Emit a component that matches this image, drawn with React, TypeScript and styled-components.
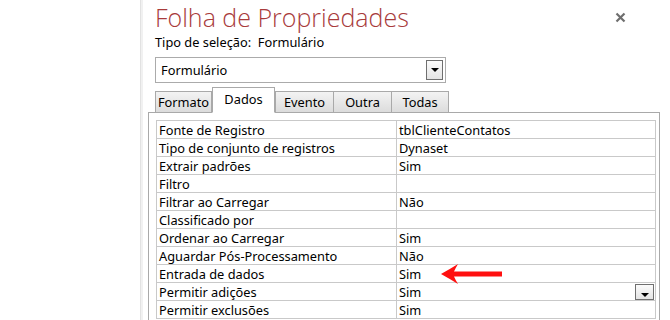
import React from 'react';
import styled, { createGlobalStyle } from 'styled-components';

const GlobalStyle = createGlobalStyle`
  html, body {
    margin: 0;
    padding: 0;
    background: #ffffff;
  }
  body {
    font-family: "Noto Sans", "Open Sans", sans-serif;
    font-size: 12.8px;
    color: #000;
  }
`;

const Page = styled.div`
  display: flex;
  width: 670px;
  height: 320px;
  overflow: hidden;
  background: #fff;
`;

const Blank = styled.div`
  width: 140px;
  flex-shrink: 0;
  border-right: 1px solid #e2e2e2;
  box-shadow: 2px 0 0 #f1f1f1;
`;

const Pane = styled.div`
  flex: 1;
  display: flex;
  flex-direction: column;
  padding-left: 7px;
  padding-right: 11px;
`;

const Header = styled.div`
  display: flex;
  flex-direction: column;
  padding-left: 7px;
  position: relative;
`;

const Title = styled.h1`
  margin: 0;
  padding-top: 1px;
  font-family: "Open Sans", "Noto Sans", sans-serif;
  font-weight: 300;
  font-size: 25px;
  line-height: 32px;
  color: #a83b3b;
`;

const CloseButton = styled.div`
  position: absolute;
  top: 9px;
  right: 34px;
  width: 11px;
  height: 11px;
`;

const SelectionType = styled.div`
  margin-top: 1px;
  line-height: 17px;
  white-space: pre;
`;

const Combo = styled.div`
  margin-top: 6px;
  width: 291px;
  height: 26px;
  box-sizing: border-box;
  border: 1px solid #ababab;
  display: flex;
  align-items: center;
  justify-content: space-between;
  padding: 0 2px 0 5px;
`;

const DropButton = styled.div<{ $small?: boolean }>`
  width: ${(p) => (p.$small ? 19 : 17)}px;
  height: ${(p) => (p.$small ? 16 : 20)}px;
  box-sizing: border-box;
  border: 1px solid #6f6f6f;
  background: linear-gradient(#fbfbfb, #e4e4e4);
  display: flex;
  align-items: ${(p) => (p.$small ? 'flex-end' : 'center')};
  justify-content: center;
  padding-bottom: ${(p) => (p.$small ? 2 : 0)}px;
`;

const Triangle = styled.div`
  width: 0;
  height: 0;
  border-left: 4px solid transparent;
  border-right: 4px solid transparent;
  border-top: 4px solid #000;
`;

const Tabs = styled.div`
  display: flex;
  align-items: flex-end;
  margin-top: 4px;
  padding-left: 7px;
  height: 26px;
  position: relative;
  z-index: 1;
  margin-bottom: -1px;
`;

const Tab = styled.div<{ $active?: boolean; $w: number }>`
  width: ${(p) => p.$w}px;
  box-sizing: border-box;
  height: ${(p) => (p.$active ? 26 : 22)}px;
  border: 1px solid #a9a9a9;
  border-bottom: ${(p) => (p.$active ? '1px solid #fff' : '1px solid #a9a9a9')};
  margin-left: ${(p) => (p.$active ? 1 : 0)}px;
  margin-right: ${(p) => (p.$active ? 0 : -1)}px;
  background: ${(p) => (p.$active ? '#fff' : 'linear-gradient(#f3f3f3, #dcdcdc)')};
  display: flex;
  justify-content: center;
  align-items: ${(p) => (p.$active ? 'flex-start' : 'center')};
  padding-top: ${(p) => (p.$active ? 2 : 0)}px;
  position: relative;
  z-index: ${(p) => (p.$active ? 2 : 1)};
`;

const Sheet = styled.div`
  flex: 1;
  border: 1px solid #a9a9a9;
  border-bottom: none;
  padding: 7px 3px 0 7px;
`;

const Grid = styled.table`
  border-collapse: collapse;
  width: 500px;
  table-layout: fixed;
`;

const Row = styled.tr`
  height: 18px;
`;

const Cell = styled.td<{ $w?: number }>`
  ${(p) => (p.$w ? `width: ${p.$w}px;` : '')}
  border: 1px solid #c9c9c9;
  padding: 0 0 0 2px;
  height: 17px;
  line-height: 16px;
  white-space: nowrap;
  overflow: visible;
  position: relative;
`;

const Arrow = styled.svg`
  position: absolute;
  left: 44px;
  top: -2px;
`;

const ComboInCell = styled.div`
  position: absolute;
  right: 1px;
  top: 1px;
`;

const rows: [string, string][] = [
  ['Fonte de Registro', 'tblClienteContatos'],
  ['Tipo de conjunto de registros', 'Dynaset'],
  ['Extrair padrões', 'Sim'],
  ['Filtro', ''],
  ['Filtrar ao Carregar', 'Não'],
  ['Classificado por', ''],
  ['Ordenar ao Carregar', 'Sim'],
  ['Aguardar Pós-Processamento', 'Não'],
  ['Entrada de dados', 'Sim'],
  ['Permitir adições', 'Sim'],
  ['Permitir exclusões', 'Sim'],
];

const tabs = [
  { name: 'Formato', w: 57 },
  { name: 'Dados', w: 63, active: true },
  { name: 'Evento', w: 59 },
  { name: 'Outra', w: 59 },
  { name: 'Todas', w: 58 },
];

const App: React.FC = () => {
  return (
    <>
      <GlobalStyle />
      <Page>
        <Blank />
        <Pane>
          <Header>
            <Title>Folha de Propriedades</Title>
            <CloseButton>
              <svg width="11" height="11" viewBox="0 0 11 11">
                <path d="M1.5 1.5 L9.5 9.5 M9.5 1.5 L1.5 9.5" stroke="#6e6e6e" strokeWidth="2.2" />
              </svg>
            </CloseButton>
            <SelectionType>{'Tipo de seleção:  Formulário'}</SelectionType>
            <Combo>
              <span>Formulário</span>
              <DropButton>
                <Triangle />
              </DropButton>
            </Combo>
          </Header>
          <Tabs>
            {tabs.map((t) => (
              <Tab key={t.name} $w={t.w} $active={t.active}>
                {t.name}
              </Tab>
            ))}
          </Tabs>
          <Sheet>
            <Grid>
              <tbody>
                {rows.map(([label, value], i) => (
                  <Row key={label}>
                    <Cell $w={237}>{label}</Cell>
                    <Cell>
                      {value}
                      {label === 'Entrada de dados' && (
                        <Arrow width="62" height="22" viewBox="0 0 62 22">
                          <path d="M0 11 Q9 6 17 1 Q14 6 13 8.5 L61 8.5 L61 13.5 L13 13.5 Q14 16 17 21 Q9 16 0 11 Z" fill="#ff1010" />
                        </Arrow>
                      )}
                      {i === 9 && (
                        <ComboInCell>
                          <DropButton $small>
                            <Triangle />
                          </DropButton>
                        </ComboInCell>
                      )}
                    </Cell>
                  </Row>
                ))}
              </tbody>
            </Grid>
          </Sheet>
        </Pane>
      </Page>
    </>
  );
};

export default App;
